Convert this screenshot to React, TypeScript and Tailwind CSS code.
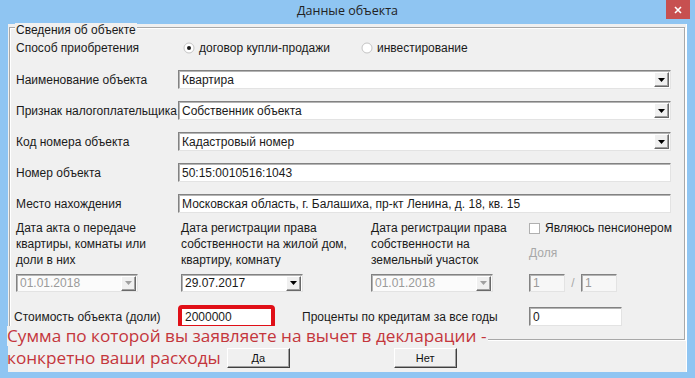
import React from 'react';

const ui = "font-['Liberation_Sans',Arial,sans-serif] text-[12px] text-[#1a1a1a]";

function Arrow({ disabled }: { disabled?: boolean }) {
  return (
    <div className="w-[15px] h-[15px] mr-[1px] flex items-center justify-center bg-[#f0f0f0] border border-t-[#fff] border-l-[#fff] border-b-[#696969] border-r-[#696969] shadow-[inset_-1px_-1px_0_#a0a0a0]">
      <svg width="7" height="4" viewBox="0 0 7 4">
        <path d="M0 0h7L3.5 4z" fill={disabled ? '#a0a0a0' : '#000'} />
      </svg>
    </div>
  );
}

function Box({
  children,
  className = '',
  bg = 'bg-white',
  arrow,
  disabled,
}: {
  children?: React.ReactNode;
  className?: string;
  bg?: string;
  arrow?: boolean;
  disabled?: boolean;
}) {
  return (
    <div
      className={`flex items-center border border-t-[#828282] border-l-[#828282] border-b-[#e3e3e3] border-r-[#e3e3e3] shadow-[inset_1px_1px_0_#b4b4b4] ${bg} ${className}`}
    >
      <span className={`flex-1 pl-[3px] truncate ${disabled ? 'text-[#9a9a9a]' : ''}`}>{children}</span>
      {arrow && <Arrow disabled={disabled} />}
    </div>
  );
}

function Radio({ checked }: { checked?: boolean }) {
  return (
    <svg width="12" height="12" viewBox="0 0 12 12">
      <circle cx="6" cy="6" r="5" fill="#fff" stroke="#c4c4c4" />
      {checked && <circle cx="6" cy="6" r="2" fill="#1a1a1a" />}
    </svg>
  );
}

function Button({ children }: { children: React.ReactNode }) {
  return (
    <div className="w-[63px] h-[20px] flex items-center justify-center bg-[#f0f0f0] border border-t-[#fff] border-l-[#fff] border-b-[#404040] border-r-[#404040] shadow-[inset_-1px_-1px_0_#a0a0a0] text-[11px]">
      {children}
    </div>
  );
}

const rows: { label: string; value: string; combo: boolean }[] = [
  { label: 'Наименование объекта', value: 'Квартира', combo: true },
  { label: 'Признак налогоплательщика', value: 'Собственник объекта', combo: true },
  { label: 'Код номера объекта', value: 'Кадастровый номер', combo: true },
  { label: 'Номер объекта', value: '50:15:0010516:1043', combo: false },
  { label: 'Место нахождения', value: 'Московская область, г. Балашиха, пр-кт Ленина, д. 18, кв. 15', combo: false },
];

export default function App() {
  return (
    <div className={`w-[695px] h-[378px] bg-[#8fc5f2] flex flex-col px-[8px] pb-[6px] ${ui}`}>
      <div className="h-[24px] shrink-0 relative flex items-center justify-center">
        <span className="font-['Open_Sans',sans-serif] text-[12.5px] text-[#222] -mt-[1px]">Данные объекта</span>
        <div className="absolute right-[-3px] top-0 w-[24px] h-[19px] bg-[#c75050] flex items-center justify-center">
          <svg width="8" height="8" viewBox="0 0 8 8">
            <path d="M1 1l6 6M7 1L1 7" stroke="#fff" strokeWidth="1.6" />
          </svg>
        </div>
      </div>

      <div className="flex-1 bg-[#f0f0f0] flex flex-col border-r border-r-[#fff]">
        <div className="relative mt-[3px] mx-[1px] border border-[#a8a8a8] shadow-[inset_1px_1px_0_#fff,1px_1px_0_#fff] pl-[6px] pr-[13px] pt-[11px] pb-[11px]">
          <span className="absolute left-[5px] -top-[5px] px-[1px] bg-[#f0f0f0] leading-[14px]">Сведения об объекте</span>

          <div className="flex items-center h-[18px]">
            <span className="w-[162px] shrink-0">Способ приобретения</span>
            <div className="flex items-center gap-[4px] ml-[5px] w-[178px]">
              <Radio checked />
              <span>договор купли-продажи</span>
            </div>
            <div className="flex items-center gap-[4px]">
              <Radio />
              <span>инвестирование</span>
            </div>
          </div>

          {rows.map((r, i) => (
            <div key={r.label} className={`flex items-center h-[19px] ${i === 0 ? 'mt-[13px]' : 'mt-[12px]'}`}>
              <span className="w-[162px] shrink-0 whitespace-nowrap">{r.label}</span>
              <Box className="flex-1 h-[19px]" arrow={r.combo}>
                {r.value}
              </Box>
            </div>
          ))}

          <div className="flex mt-[7px]">
            <div className="w-[165px] shrink-0 flex flex-col">
              <div className="h-[48px] leading-[16px]">
                Дата акта о передаче
                <br />
                квартиры, комнаты или
                <br />
                доли в них
              </div>
              <Box className="mt-[6px] w-[122px] h-[18px]" bg="bg-[#fbfbfb]" arrow disabled>
                01.01.2018
              </Box>
            </div>
            <div className="w-[190px] shrink-0 flex flex-col">
              <div className="h-[48px] leading-[16px]">
                Дата регистрации права
                <br />
                собственности на жилой дом,
                <br />
                квартиру, комнату
              </div>
              <Box className="mt-[6px] w-[122px] h-[18px]" arrow>
                29.07.2017
              </Box>
            </div>
            <div className="w-[158px] shrink-0 flex flex-col">
              <div className="h-[48px] leading-[16px]">
                Дата регистрации права
                <br />
                собственности на
                <br />
                земельный участок
              </div>
              <Box className="mt-[6px] w-[122px] h-[18px]" bg="bg-[#fbfbfb]" arrow disabled>
                01.01.2018
              </Box>
            </div>
            <div className="flex-1 flex flex-col">
              <div className="h-[48px]">
                <div className="flex items-center h-[16px] gap-[5px] whitespace-nowrap">
                  <div className="w-[11px] h-[11px] shrink-0 bg-white border border-[#b0b0b0]" />
                  <span>Являюсь пенсионером</span>
                </div>
                <div className="mt-[9px] leading-[16px] text-[#a8a8a8]">Доля</div>
              </div>
              <div className="mt-[6px] flex items-center h-[18px]">
                <Box className="w-[36px] h-[18px]" bg="bg-[#f7f7f7]" disabled>
                  1
                </Box>
                <span className="w-[16px] text-center text-[#a8a8a8]">/</span>
                <Box className="w-[36px] h-[18px]" bg="bg-[#f7f7f7]" disabled>
                  1
                </Box>
              </div>
            </div>
          </div>

          <div className="flex items-center h-[23px] mt-[13px]">
            <span className="w-[164px] -ml-[2px] shrink-0">Стоимость объекта (доли)</span>
            <div className="w-[97px] h-[24px] rounded-[4px] border-[4px] border-[#e00f17] bg-white flex items-center pl-[3px]">
              2000000
            </div>
            <span className="ml-[27px] w-[227px] shrink-0">Проценты по кредитам за все годы</span>
            <Box className="w-[93px] h-[19px]">0</Box>
          </div>
        </div>

        <div className="font-['Open_Sans',sans-serif] text-[17.2px] text-[#c4363c] leading-[20px] -ml-[1px]">
          <div className="relative -mt-[14px] w-fit pr-[2px] bg-[#f0f0f0]">
            Сумма по которой вы заявляете на вычет в декларации -
          </div>
          <div className="flex items-center h-[20px] mt-[2px]">
            <span>конкретно ваши расходы</span>
            <div className="ml-[6px] flex items-center gap-[104px] text-[#111] font-['Liberation_Sans',Arial,sans-serif]">
              <Button>Да</Button>
              <Button>Нет</Button>
            </div>
          </div>
        </div>
      </div>
    </div>
  );
}
